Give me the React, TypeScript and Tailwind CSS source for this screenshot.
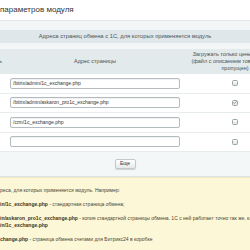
import { Check } from "lucide-react";

const rows = [
  { path: "/bitrix/admin/1c_exchange.php", pricesOnly: false },
  { path: "/bitrix/admin/askaron_pro1c_exchange.php", pricesOnly: true },
  { path: "/crm/1c_exchange.php", pricesOnly: false },
  { path: "", pricesOnly: false },
];

function Checkbox({ checked }: { checked: boolean }) {
  return (
    <span className="flex h-[6px] w-[6px] items-center justify-center rounded-[1.5px] border border-[#9aa3a6] bg-gradient-to-b from-[#fdfdfd] to-[#dfe3e4]">
      {checked && <Check size={5} strokeWidth={4} className="text-[#555]" />}
    </span>
  );
}

export default function App() {
  return (
    <div
      className="h-[250px] w-[250px] overflow-hidden bg-white text-[#3b4447]"
      style={{ fontFamily: '"Liberation Sans", Arial, sans-serif' }}
    >
      <div className="flex h-[20px] items-center text-[8px] text-[#333]">
        параметров модуля
      </div>

      <div className="h-[10px] border-t border-[#e3e8ea] bg-[#f2f6f7]" />

      <div className="flex h-[13px] items-center justify-center bg-[#dfe7ea] text-[5.8px] text-[#4a5356]">
        Адреса страниц обмена с 1С, для которых применяется модуль
      </div>

      <div className="h-[6px] bg-[#f2f6f7]" />

      <div className="w-[296px]">
        <div className="grid h-[25px] grid-cols-[6px_178px_102px] items-center bg-[#e3eaec] text-[5.5px] leading-[7px] text-[#4a5356]">
          <div className="-ml-[1px] overflow-hidden">ь</div>
          <div className="text-center">Адрес страницы</div>
          <div className="whitespace-nowrap text-center">
            Загружать только цены и остатки
            <br />
            (файл с описанием товаров будет
            <br />
            пропущен)
          </div>
        </div>

        {rows.map((row, i) => (
          <div
            key={i}
            className="grid h-[19.5px] grid-cols-[10px_170px_110px] items-center border-b border-[#e7ecee] bg-white"
          >
            <div />
            <div className="flex h-[11px] items-center rounded-[2px] border border-[#b3bbbe] bg-white pl-[2px] text-[5px] text-[#333] shadow-[inset_0_1px_1px_rgba(0,0,0,0.06)]">
              {row.path}
            </div>
            <div className="flex justify-center">
              <Checkbox checked={row.pricesOnly} />
            </div>
          </div>
        ))}
      </div>

      <div className="flex h-[25px] items-center justify-center border-b border-[#dde3e5] bg-[#f4f7f8]">
        <button
          type="button"
          className="flex h-[10px] w-[21px] items-center justify-center rounded-[2px] border border-[#c3c9cb] bg-gradient-to-b from-white to-[#e6e9ea] text-[5px] text-[#333] shadow-[0_1px_1px_rgba(0,0,0,0.15)]"
        >
          Еще
        </button>
      </div>

      <div className="h-full border-t border-[#efe7bf] bg-[#fcf7d7] pt-[9px] text-[5px] leading-[7px] text-[#4b4533]">
        <p>реса, для которых применяется модуль. Например:</p>
        <p className="mt-[7px]">
          <b className="text-[#3a3520]">in/1c_exchange.php</b> - стандартная страница обмена;
        </p>
        <p className="mt-[7px] whitespace-nowrap">
          <b className="text-[#3a3520]">in/askaron_pro1c_exchange.php</b> - копия стандартной страницы обмена. 1С с ней работает точно так же, как
          <br />
          <b className="text-[#3a3520]">in/1c_exchange.php</b>
        </p>
        <p className="mt-[7px]">
          <b className="text-[#3a3520]">change.php</b> - страница обмена счетами для Битрикс24 в коробке
        </p>
      </div>
    </div>
  );
}
